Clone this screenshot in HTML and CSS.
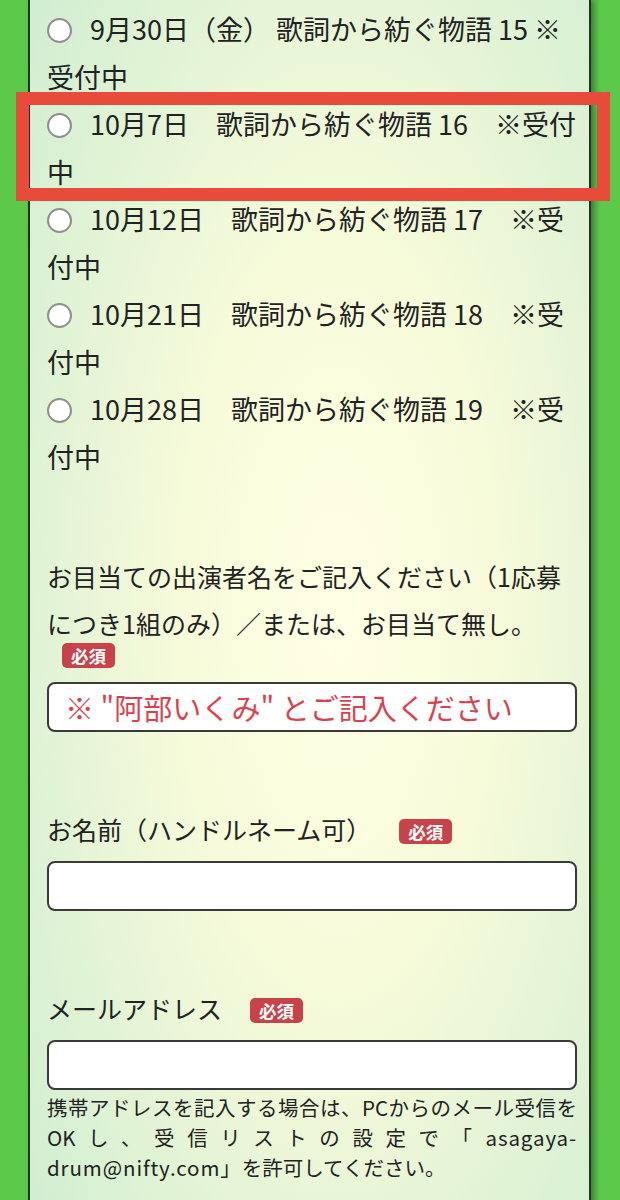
FILE: index.html
```html
<!DOCTYPE html>
<html lang="ja">
<head>
  <meta charset="UTF-8">
  <title>ライブ予約フォーム</title>
  <meta name="viewport" content="width=device-width, initial-scale=1">
  <link rel="stylesheet" href="styles.css">
</head>
<body>
  <div class="panel">
    <form class="entry-form">
      <div class="dates">
        <label class="date-row"><input type="radio" name="date" value="15">9月30日（金） 歌詞から紡ぐ物語 15 ※受付中</label>
        <label class="date-row"><input type="radio" name="date" value="16">10月7日　歌詞から紡ぐ物語 16　※受付中</label>
        <label class="date-row"><input type="radio" name="date" value="17">10月12日　歌詞から紡ぐ物語 17　※受付中</label>
        <label class="date-row"><input type="radio" name="date" value="18">10月21日　歌詞から紡ぐ物語 18　※受付中</label>
        <label class="date-row"><input type="radio" name="date" value="19">10月28日　歌詞から紡ぐ物語 19　※受付中</label>
      </div>

      <div class="field">
        <label class="field-label label-long" for="artist">お目当ての出演者名をご記入ください（1応募につき1組のみ）／または、お目当て無し。</label>
        <div class="req-line"><span class="req">必須</span></div>
        <input class="text-input input-first" type="text" id="artist" name="artist" placeholder="※ &quot;阿部いくみ&quot; とご記入ください">
      </div>

      <div class="field">
        <label class="field-label" for="name">お名前（ハンドルネーム可）<span class="req req-inline">必須</span></label>
        <input class="text-input" type="text" id="name" name="name">
      </div>

      <div class="field">
        <label class="field-label" for="mail">メールアドレス<span class="req req-inline">必須</span></label>
        <input class="text-input" type="email" id="mail" name="mail">
        <p class="note">携帯アドレスを記入する場合は、PCからのメール受信をOKし、受信リストの設定で<span class="mail-addr">「asagaya-</span><span class="mail-addr">drum@nifty.com」</span>を許可してください。</p>
      </div>
    </form>

    <!-- highlight frame drawn over the 10/7 entry -->
    <div class="highlight"></div>
  </div>
</body>
</html>
```

FILE: styles.css
```css
body {
  margin: 0;
  background: #5cc94b;
  font-family: "Noto Sans CJK JP", sans-serif;
  color: #222;
}
.panel {
  position: relative;
  margin: 0 29px 0 28px;
  min-height: 1200px;
  box-sizing: border-box;
  padding: 5px 12px 40px 17px;
  border-left: 2px solid #2b2b2b;
  border-right: 2px solid #2b2b2b;
  background: radial-gradient(ellipse 70% 75% at 55% 50%, #ffffe4 0%, #f7fbda 40%, #d2eed2 100%);
  box-shadow: 4px 0 6px rgba(0,0,0,0.35);
}
.date-row {
  display: block;
  font-size: 27px;
  line-height: 47.5px;
}
.date-row input {
  appearance: none;
  -webkit-appearance: none;
  box-sizing: border-box;
  width: 25px;
  height: 25px;
  margin: 0 18px 0 0;
  border: 2px solid #8f8f8f;
  border-radius: 50%;
  background: #fff;
  vertical-align: -3px;
}
.field {
  margin-top: 73px;
}
.field-label {
  display: block;
  font-size: 25px;
  line-height: 48px;
}
.label-long {
  line-height: 47px;
}
.req {
  display: inline-block;
  height: 25px;
  line-height: 25px;
  padding: 0 9px;
  border-radius: 5px;
  background: #c8424a;
  color: #fff;
  font-size: 17.5px;
  font-weight: bold;
}
.req-line {
  margin: -4px 0 0 15px;
  height: 25px;
}
.req-inline {
  margin-left: 28px;
  vertical-align: 1px;
}
.text-input {
  display: block;
  box-sizing: border-box;
  width: 100%;
  height: 50px;
  margin-top: 8px;
  padding: 0 16px;
  border: 2px solid #3a3a3a;
  border-radius: 8px;
  background: #fff;
  font-family: inherit;
  font-size: 29px;
}
.input-first {
  margin-top: 14px;
}
.text-input::placeholder {
  color: #d8434f;
}
.note {
  margin: 2px 0 0 0;
  font-size: 20.5px;
  line-height: 30px;
  text-align: justify;
}
.mail-addr {
  letter-spacing: 0.9px;
}
.highlight {
  position: absolute;
  left: -14px;
  top: 92px;
  width: 594px;
  height: 109px;
  box-sizing: border-box;
  border: 13px solid #e84a3c;
}
```
